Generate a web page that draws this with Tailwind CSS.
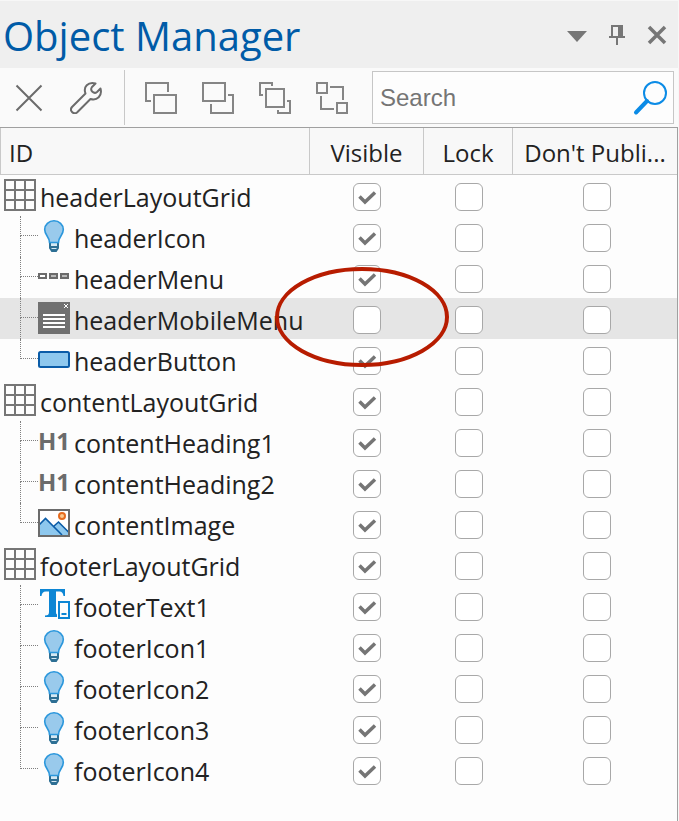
<!DOCTYPE html>
<html lang="en">
<head>
<meta charset="utf-8">
<meta name="viewport" content="width=device-width, initial-scale=1">
<title>Object Manager</title>
<script src="https://cdn.jsdelivr.net/npm/@tailwindcss/browser@4"></script>
</head>
<body class="bg-[#fdfdfd] font-['Open_Sans','Noto_Sans',sans-serif] text-[#222]">
<svg class="hidden" aria-hidden="true">
  <symbol id="grid" viewBox="0 0 32 32"><path d="M1 1h30v30H1zM11 1v30M21 1v30M1 11h30M1 21h30" fill="#fdfdfd" stroke="#767676" stroke-width="2"/></symbol>
  <symbol id="bulb" viewBox="0 0 32 32">
    <path d="M12 22v6l2 3h4l2-3v-6z" fill="#d5e8f3" stroke="#2d6f94" stroke-width="2"/><path d="M11 27h10" stroke="#2d6f94" stroke-width="2"/><path d="M13 29h6l-1.500 3h-3z" fill="#2d6f94"/>
    <path d="M11.500 22.500c0-6-4.800-7-4.800-13a9.300 8.700 0 0 1 18.600 0c0 6-4.800 7-4.800 13z" fill="#99caec" stroke="#2b97dc" stroke-width="1.600"/>
  </symbol>
  <symbol id="menu" viewBox="0 0 32 32"><g stroke="#6b6b6b" stroke-width="2"><path d="M1 13h7v4H1z" fill="#fff"/><path d="M12 13h7v4h-7zM23 13h7v4h-7z" fill="#b9b9b9"/></g></symbol>
  <symbol id="mobile" viewBox="0 0 32 32"><path d="M0 0h32v32H0z" fill="#707070"/><path d="M5 13h22M5 17h22M5 21h22M5 25h22" stroke="#fff" stroke-width="2"/><path d="M26 2l4 4M30 2l-4 4" stroke="#fff"/></symbol>
  <symbol id="button" viewBox="0 0 32 32"><rect x="1" y="9" width="30" height="15" rx="1.500" fill="#8ec8ee" stroke="#0a5ca8" stroke-width="2"/></symbol>
  <symbol id="image" viewBox="0 0 32 32"><path d="M1 3h30v26H1z" fill="#fff"/><path d="M2 17l5.500-5.500 8 8L20.500 15 30 24v4H2z" fill="#8ec8ee"/><path d="M1 18l6.500-6.500L24 28M15.500 19.500L20.500 15 31 25.500" fill="none" stroke="#0a5ca8" stroke-width="1.600"/><circle cx="24" cy="9" r="3" fill="#fbc98f" stroke="#e56b1f" stroke-width="2"/><path d="M1 3h30v26H1z" fill="none" stroke="#6b6b6b" stroke-width="2"/></symbol>
  <symbol id="text" viewBox="0 0 32 32"><path d="M2 0h25v7h-1.500c-.5-3-1.500-4.500-4-4.500H18V23c0 2 .5 2.500 2 3v2H7v-1.500c3 0 4-1 4-3.500V2.500H8C5 2.500 4 4 3.500 7H2z" fill="#0d86d4"/><path d="M19 12h13v18H19z" fill="#fdfdfd"/><path d="M21 13h10v16H21z" fill="#fdfdfd" stroke="#0d86d4" stroke-width="2"/><path d="M23.500 25h5" stroke="#0d86d4" stroke-width="2"/></symbol>
</svg>

<main class="flex min-h-screen flex-col border-t border-r border-[#f7f7f7]">
  <header class="flex h-[67px] items-center justify-between bg-[#efefef] pr-[11px] pl-[3px]">
    <h1 class="pt-0.5 text-[40px] leading-[64px] text-[#005ba7]">Object Manager</h1>
    <div class="flex items-center gap-5">
      <button type="button" aria-label="Panel options"><svg class="size-5" viewBox="0 0 20 20"><path d="M0 6h20l-10 11z" fill="#767676"/></svg></button>
      <button type="button" aria-label="Pin panel"><svg class="size-5" viewBox="0 0 20 20"><path d="M4 0h12v11h2v2h-7v7H9v-7H2v-2h2zM6 2v9h5V2z" fill="#767676" fill-rule="evenodd"/></svg></button>
      <button type="button" aria-label="Close panel"><svg class="size-5" viewBox="0 0 20 20"><path d="M2 2l16 16M18 2L2 18" stroke="#767676" stroke-width="3.500"/></svg></button>
    </div>
  </header>

  <div class="flex h-[59px] items-center bg-[#fafafa] pr-1 pl-[13px]" role="toolbar" aria-label="Object tools">
    <button type="button" aria-label="Delete"><svg class="size-8" viewBox="0 0 32 32"><path d="M3.500 3.500l25 25M28.500 3.500l-25 25" stroke="#6b6b6b" stroke-width="2"/></svg></button>
    <button type="button" class="ml-[25px]" aria-label="Properties"><svg class="size-8" viewBox="0 0 32 32"><path d="M25.500 1.500C18-.5 13 5 15.500 11.500L2 25c-3 3.500 1.500 8 5 5.500L20.500 17C27 19 32.500 14 30.500 6.500L27 10c-3 2.500-7.500-1.500-5-5z" fill="none" stroke="#6b6b6b" stroke-width="2" stroke-linejoin="round"/></svg></button>
    <span class="ml-[22px] h-[55px] w-px bg-[#c8c8c8]"></span>
    <div class="ml-5 flex gap-[25px]">
      <button type="button" aria-label="Bring to front"><svg class="size-8" viewBox="0 0 32 32"><path d="M6 19H1V1h22v9M9 13h22v18H9z" fill="none" stroke="#858585" stroke-width="2"/></svg></button>
      <button type="button" aria-label="Send to back"><svg class="size-8" viewBox="0 0 32 32"><path d="M1 1h22v18H1zM26 13h5v18H9v-9" fill="none" stroke="#858585" stroke-width="2"/></svg></button>
      <button type="button" aria-label="Bring forward"><svg class="size-8" viewBox="0 0 32 32"><path d="M4 13H1V1h12v3M7 7h18v18H7zM28 19h3v12H19v-3" fill="none" stroke="#858585" stroke-width="2"/></svg></button>
      <button type="button" aria-label="Tab order"><svg class="size-8" viewBox="0 0 32 32"><path d="M1 1h10v10H1zM21 21h10v10H21zM14 5h13v13M5 14v13h13" fill="none" stroke="#858585" stroke-width="2"/></svg></button>
    </div>
    <label class="ml-6 flex h-[53px] min-w-0 flex-1 items-center border border-[#c6c6c6] bg-[#fdfdfd] pr-1 pl-[7px]">
      <input type="search" placeholder="Search" aria-label="Search" class="min-w-0 flex-1 bg-transparent font-['Liberation_Sans',sans-serif] text-2xl text-[#757575] outline-none placeholder:text-[#757575]">
      <svg class="size-9" viewBox="0 0 36 36"><circle cx="22" cy="13" r="11" fill="none" stroke="#0b8be6" stroke-width="2"/><path d="M14 21L3 32.500" stroke="#0b8be6" stroke-width="4" stroke-linecap="round"/></svg>
    </label>
  </div>

  <div class="flex-1 border-t border-r border-[#a0a0a0]">
    <table class="w-full table-fixed border-separate border-spacing-0">
      <thead>
        <tr class="h-[47px] bg-[#f8f8f8] text-2xl">
          <th class="border border-t-0 border-[#c9c9c9] p-0 pt-1 pl-2 text-left font-normal">ID</th>
          <th class="w-[114px] border-r border-b border-[#c9c9c9] p-0 pt-1 font-normal">Visible</th>
          <th class="w-[89px] border-r border-b border-[#c9c9c9] p-0 pt-1 font-normal">Lock</th>
          <th class="w-[164px] border-b border-[#c9c9c9] p-0 pt-1 font-normal whitespace-nowrap">Don't Publi...</th>
        </tr>
      </thead>
      <tbody id="rows"></tbody>
    </table>
  </div>
</main>

<script>
const objects = [
  ['headerLayoutGrid', 'grid', 0, 1], ['headerIcon', 'bulb', 1, 1], ['headerMenu', 'menu', 1, 1],
  ['headerMobileMenu', 'mobile', 1, 0], ['headerButton', 'button', 2, 1],
  ['contentLayoutGrid', 'grid', 0, 1], ['contentHeading1', 'h1', 1, 1], ['contentHeading2', 'h1', 1, 1], ['contentImage', 'image', 2, 1],
  ['footerLayoutGrid', 'grid', 0, 1], ['footerText1', 'text', 1, 1], ['footerIcon1', 'bulb', 1, 1],
  ['footerIcon2', 'bulb', 1, 1], ['footerIcon3', 'bulb', 1, 1], ['footerIcon4', 'bulb', 2, 1],
];
const check = (name, column, on) => `<label class="mx-auto grid size-7"><input type="checkbox" aria-label="${name} ${column}" ${on ? 'checked' : ''} class="peer col-start-1 row-start-1 size-7 appearance-none rounded-md border border-[#a8a8a8] bg-white"><svg class="pointer-events-none invisible col-start-1 row-start-1 size-7 peer-checked:visible" viewBox="0 0 28 28"><path d="M6.500 13.500l5.500 5.500L22 9.500" fill="none" stroke="#757575" stroke-width="3.500"/></svg></label>`;
// level: 0 = layout grid, 1 = child, 2 = last child of its grid
document.getElementById('rows').innerHTML = objects.map(([name, icon, level, visible]) => {
  const selected = name === 'headerMobileMenu';
  const branch = level ? `<span class="ml-5 h-[41px] w-[18px] shrink-0 self-start"><span class="block h-5 border-b border-l border-dotted border-[#808080]"></span>${level === 1 ? '<span class="block h-[21px] border-l border-dotted border-[#808080]"></span>' : ''}</span>` : '<span class="w-1 shrink-0"></span>';
  const art = icon === 'h1' ? '<span class="w-8 shrink-0 text-center font-[\'Roboto\',sans-serif] text-2xl leading-8 font-bold text-[#6b6b6b]">H1</span>' : `<svg class="size-8 shrink-0"><use href="#${icon}"/></svg>`;
  const ring = selected ? '<svg class="pointer-events-none absolute -top-8 -left-9 z-10 h-[102px] w-[176px]" viewBox="0 0 176 102"><ellipse cx="88" cy="51" rx="85" ry="48" fill="none" stroke="#b71c00" stroke-width="4"/></svg>' : '';
  return `<tr class="h-[41px] ${selected ? 'bg-[#e5e5e5]' : ''}">
    <td class="p-0 align-top"><div class="flex h-10 items-center">${branch}${art}<span class="pt-1 pl-1 text-[25px] leading-8 whitespace-nowrap">${name}</span></div></td>
    <td class="relative p-0 pt-2 align-top">${check(name, 'visible', visible)}${ring}</td>
    <td class="p-0 pt-2 align-top">${check(name, 'lock', 0)}</td>
    <td class="p-0 pt-2 pl-1 align-top">${check(name, "don't publish", 0)}</td></tr>`;
}).join('');
</script>
</body>
</html>
